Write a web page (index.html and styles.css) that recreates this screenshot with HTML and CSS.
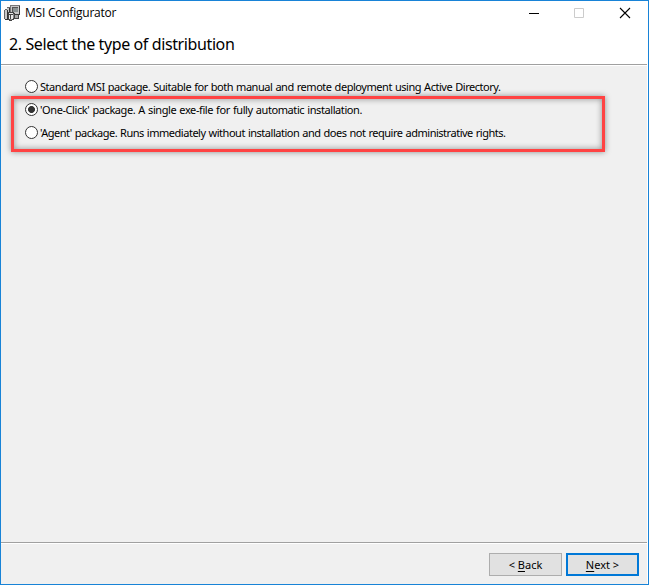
FILE: index.html
```html
<!DOCTYPE html>
<html lang="en">
<head>
<meta charset="utf-8">
<title>MSI Configurator</title>
<link rel="stylesheet" href="styles.css">
</head>
<body>
<div class="window">
  <header class="titlebar">
    <svg class="app-icon" width="16" height="16" viewBox="0 0 16 16" shape-rendering="crispEdges">
      <path fill="#777" d="M6 0h10v10H6z"/>
      <path fill="#c8c8c8" d="M7 1h8v8H7z"/>
      <path fill="#555" d="M8 2h6v5H8z"/>
      <path fill="#8b9393" d="M9 3h5v4H9z"/>
      <path fill="#3a3a3a" d="M15 1h1v9h-1zM7 9h8v1H7z"/>
      <path fill="#a8a8a8" d="M9 10h6v3H9z"/>
      <path fill="#444" d="M10 13h5v1h-5zM14 10h1v3h-1z"/>
      <path fill="#666" d="M3 2h3v1H3zM1 4h2v1H1zM0 5h1v9H0z"/>
      <path fill="#c8c8c8" d="M3 3h3v4H3zM1 5h2v9H1z"/>
      <path fill="#333" d="M3 5h1v10H3zM5 3h1v4H5zM1 14h2v1H1z"/>
      <path fill="#444" d="M4 7h6v1h1v6h-1v1H8v1H5v-1H4z"/>
      <path fill="#e8e8e8" d="M5 8h4v1H5zM5 10h1v4H5zM7 10h2v4H7z"/>
      <path fill="#888" d="M9 9h1v4H9zM6 14h2v1H6z"/>
    </svg>
    <h1 class="caption">MSI Configurator</h1>
    <svg class="controls" width="138" height="24" viewBox="510 1 138 24">
      <path stroke="#000" d="M529 13.5h10"/>
      <path stroke="#ccc" fill="none" d="M574.5 8.5h9v9h-9z"/>
      <path stroke="#000" stroke-width="1.1" d="M620 8l10 10M630 8l-10 10"/>
    </svg>
  </header>
  <h2 class="heading"><span>2. Select the type of distribution</span></h2>
  <main class="content">
    <label class="option"><i class="radio"></i><span class="t1">Standard MSI package. Suitable for both manual and remote deployment using Active Directory.</span></label>
    <label class="option"><i class="radio checked"></i><span class="t2">'One-Click' package. A single exe-file for fully automatic installation.</span></label>
    <label class="option"><i class="radio"></i><span class="t3">'Agent' package. Runs immediately without installation and does not require administrative rights.</span></label>
    <div class="highlight"></div>
  </main>
  <footer class="footer">
    <button class="btn"><span>&lt; <u>B</u>ack</span></button>
    <button class="btn primary"><span><u>N</u>ext &gt;</span></button>
  </footer>
</div>
</body>
</html>
```
FILE: styles.css
```css
* { box-sizing: border-box; }
body { margin: 0; font-family: "Noto Sans", sans-serif; color: #000; }
.window {
  width: 649px; height: 585px; border: 1px solid #1883d7; background: #fff;
  display: flex; flex-direction: column; position: relative;
}
.titlebar { height: 24px; display: flex; align-items: center; padding-left: 3px; }
.caption { margin: 0 auto 0 5px; font: 400 12px/24px "Open Sans", sans-serif; white-space: nowrap; letter-spacing: -0.23px; }
.heading { margin: 0; height: 39px; padding-left: 8px; font-size: 16px; font-weight: 400; line-height: 39px; white-space: nowrap; letter-spacing: -0.39px; }
.content {
  flex: 1; margin-right: 1px; background: #f0f0f0; padding: 10px 0 0 24px;
  border-top: 1px solid #a0a0a0; box-shadow: inset 0 1px #fff;
}
.option { display: flex; align-items: center; height: 23px; gap: 2px; font-size: 11px; line-height: 15px; white-space: nowrap; }
.radio { width: 13px; height: 13px; flex: none; border: 1px solid #333; border-radius: 50%; background: #fff; }
.checked { background: radial-gradient(circle, #333 3.1px, #fff 3.8px); }
.t1, .t2, .t3 { word-spacing: 0.6px; }
.t1 { letter-spacing: -0.46px; }
.t2 { letter-spacing: -0.41px; }
.t3 { letter-spacing: -0.48px; }
.highlight {
  position: absolute; left: 10px; top: 95px; width: 594px; height: 56px; border: 3px solid #ff4343;
  box-shadow: 0 0 6px rgba(0,0,0,.4), inset 0 0 6px rgba(0,0,0,.4);
}
.footer {
  height: 42px; background: #f0f0f0; border-top: 1px solid #a0a0a0; box-shadow: inset 0 1px #fff;
  margin-right: 1px; display: flex; justify-content: flex-end; gap: 4px; padding: 10px 8px 0 0;
}
.btn { width: 73px; height: 23px; padding: 0; border: 1px solid #adadad; background: #e1e1e1; font: 11px/19px "Noto Sans", sans-serif; color: #000; }
.primary { border: 2px solid #0078d7; }
.btn u { text-underline-offset: 2px; }
```
